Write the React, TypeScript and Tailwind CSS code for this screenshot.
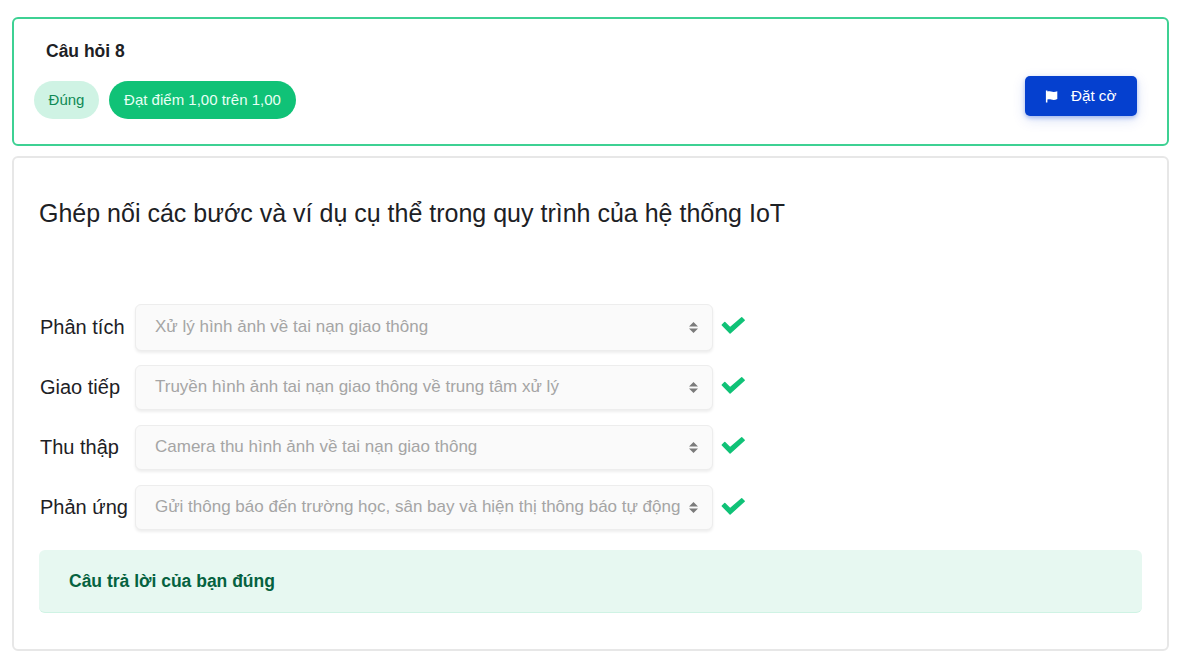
const rows = [
  { label: "Phân tích", answer: "Xử lý hình ảnh về tai nạn giao thông", box: "h-[47px]", check: "mt-[12px]" },
  { label: "Giao tiếp", answer: "Truyền hình ảnh tai nạn giao thông về trung tâm xử lý", box: "mt-px h-[45px]", check: "mt-[12px]" },
  { label: "Thu thập", answer: "Camera thu hình ảnh về tai nạn giao thông", box: "mt-px h-[45px]", check: "mt-[12px]" },
  { label: "Phản ứng", answer: "Gửi thông báo đến trường học, sân bay và hiện thị thông báo tự động", box: "mt-px h-[45px]", check: "mt-[13px]" },
];

function Flag() {
  return (
    <svg width="13" height="13" viewBox="0 0 13 13" fill="#fff">
      <path d="M.9.6h1.5v.8c1.200-.3 2.300-.2 3.600.2 2 .6 4 .6 6.300-.3v7.800c-2.300 1.100-4.300 1-6.200.4-1.400-.4-2.400-.4-3.700.1v2.800H.9z" />
    </svg>
  );
}

function Sorter() {
  return (
    <svg width="9" height="11" viewBox="0 0 9 11" fill="#7b7b7b" className="shrink-0">
      <path d="M4.500 0 9 4.600H0zM0 6.400h9L4.500 11z" />
    </svg>
  );
}

function Check({ className }: { className: string }) {
  return (
    <svg viewBox="0 0 24 18" fill="#10c277" stroke="#10c277" strokeWidth="1.4" strokeLinejoin="round" className={`ml-[8px] h-[18px] w-[24px] shrink-0 ${className}`}>
      <path d="M1.300 9 3.800 6.600 9.100 11.800 20.700 1.700 23.200 4.200 9.100 17z" />
    </svg>
  );
}

export default function App() {
  return (
    <main className="flex h-[666px] w-[1185px] flex-col gap-[10px] bg-white pt-[17px] pr-4 pl-3 font-['Liberation_Sans',Arial,sans-serif] text-[#1d2125]">
      <section className="flex h-[129px] items-start justify-between rounded-[6px] border-2 border-[#3dd193] pr-[30px] pl-5">
        <div>
          <h1 className="mt-[21px] ml-3 text-[17.500px] leading-[22px] font-bold">Câu hỏi 8</h1>
          <div className="mt-[19px] flex gap-[10px] text-[15px] leading-[38px]">
            <span className="h-[38px] w-[65px] rounded-full bg-[#cff3e4] text-center text-[#0f8a56]">Đúng</span>
            <span className="h-[38px] w-[187px] rounded-full bg-[#10c277] text-center text-[#e8fff5]">Đạt điểm 1,00 trên 1,00</span>
          </div>
        </div>
        <button className="mt-[57px] flex h-10 w-28 items-center gap-[13px] rounded-[5px] bg-[#0540cf] pl-5 text-[15.200px] text-white shadow-[0_2px_4px_rgba(5,64,207,0.3),0_4px_14px_rgba(5,64,207,0.14)]">
          <Flag />
          <span>Đặt cờ</span>
        </button>
      </section>

      <section className="h-[495px] rounded-[6px] border-2 border-[#e7e7e7] px-[25px] pt-[39px]">
        <h2 className="text-[25px] leading-[32px] whitespace-nowrap">Ghép nối các bước và ví dụ cụ thể trong quy trình của hệ thống IoT</h2>
        <div className="mt-[75px] ml-px grid auto-rows-[60px]">
          {rows.map((row) => (
            <div key={row.label} className="flex items-start">
              <span className="w-[95px] pt-[11px] text-[20px] leading-6 whitespace-nowrap">{row.label}</span>
              <div className={`flex w-[578px] items-center justify-between rounded-[6px] border border-[#ededed] bg-[#fafafa] pr-[14px] pl-[19px] text-[17px] whitespace-nowrap text-[#a5a5a5] shadow-[0_2px_3px_rgba(0,0,0,0.07)] ${row.box}`}>
                <span className="pb-[2px]">{row.answer}</span>
                <Sorter />
              </div>
              <Check className={row.check} />
            </div>
          ))}
        </div>
        <div className="mt-[6px] h-[63px] rounded-[6px] border-b border-[#cff3e4] bg-[#e7f8f1] pl-[30px] text-[17.500px] leading-[62px] font-bold text-[#056240]">
          Câu trả lời của bạn đúng
        </div>
      </section>
    </main>
  );
}
